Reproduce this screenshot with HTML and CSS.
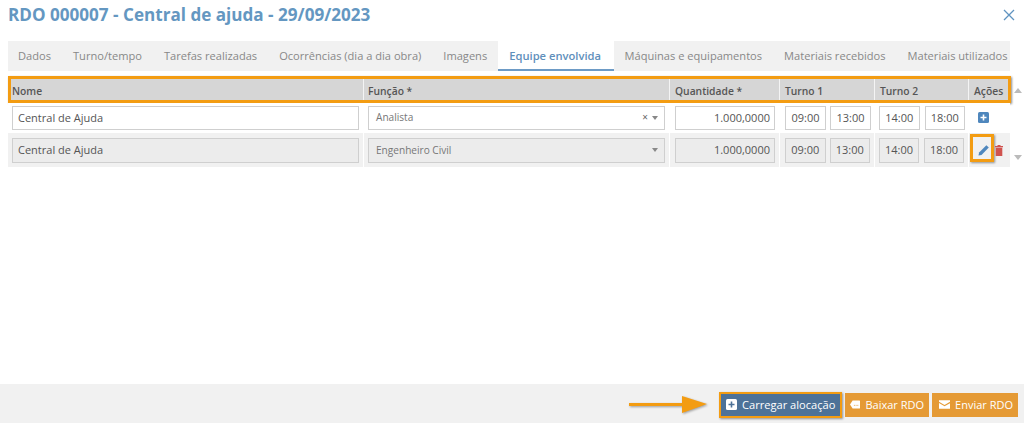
FILE: index.html
```html
<!DOCTYPE html>
<html lang="pt">
<head>
<meta charset="utf-8">
<title>RDO</title>
<link rel="stylesheet" href="styles.css">
</head>
<body>
<div class="page">
  <header class="top">
    <h1>RDO 000007 - Central de ajuda - 29/09/2023</h1>
    <svg class="close" viewBox="0 0 12 12" width="12" height="12"><path d="M1 1l10 10M11 1L1 11" stroke="#5f93c0" stroke-width="1.3" fill="none"/></svg>
  </header>
  <nav class="tabs">
    <a class="tab">Dados</a>
    <a class="tab">Turno/tempo</a>
    <a class="tab">Tarefas realizadas</a>
    <a class="tab">Ocorrências (dia a dia obra)</a>
    <a class="tab">Imagens</a>
    <a class="tab active">Equipe envolvida</a>
    <a class="tab">Máquinas e equipamentos</a>
    <a class="tab">Materiais recebidos</a>
    <a class="tab">Materiais utilizados</a>
  </nav>
  <main class="content">
    <div class="table">
      <div class="row head">
        <div class="cell">Nome</div>
        <div class="cell">Função *</div>
        <div class="cell">Quantidade *</div>
        <div class="cell">Turno 1</div>
        <div class="cell">Turno 2</div>
        <div class="cell">Ações</div>
        <span class="mark mark-head"></span>
      </div>
      <div class="row body">
        <div class="cell"><div class="field wide">Central de Ajuda</div></div>
        <div class="cell"><div class="field select small"><span>Analista</span><span class="x">×</span><span class="caret"></span></div></div>
        <div class="cell qty"><div class="field num">1.000,0000</div></div>
        <div class="cell pair"><div class="field time">09:00</div><div class="field time">13:00</div></div>
        <div class="cell pair second"><div class="field time">14:00</div><div class="field time">18:00</div></div>
        <div class="cell acts">
          <svg viewBox="0 0 11 11" width="11" height="11"><rect width="11" height="11" rx="1.5" fill="#4f87bd"/><path d="M5.5 2.5v6M2.5 5.5h6" stroke="#fff" stroke-width="1.6"/></svg>
        </div>
      </div>
      <div class="row body off">
        <div class="cell"><div class="field wide">Central de Ajuda</div></div>
        <div class="cell"><div class="field select small"><span>Engenheiro Civil</span><span class="caret"></span></div></div>
        <div class="cell qty"><div class="field num">1.000,0000</div></div>
        <div class="cell pair"><div class="field time">09:00</div><div class="field time">13:00</div></div>
        <div class="cell pair second"><div class="field time">14:00</div><div class="field time">18:00</div></div>
        <div class="cell acts">
          <span class="edit">
            <svg viewBox="0 0 12 12" width="12" height="12"><path d="M0.5 11.5l0.6-3L8.4 1.2l2.4 2.4L3.5 10.9z" fill="#4f87bd"/></svg>
          </span>
          <svg class="trash" viewBox="0 0 8 11" width="8" height="11"><path d="M0 1h8v1.2H0zM2.5 0h3v1h-3zM.7 2.8h6.6V11H.7z" fill="#d0534f"/></svg>
        </div>
      </div>
    </div>
    <div class="rail"><span class="up"></span><span class="down"></span></div>
  </main>
  <footer class="foot">
    <svg class="arrow" viewBox="0 0 78 18" width="78" height="18"><path d="M0 7h53V0l25 8-25 9v-7H0z" fill="#f39c12"/></svg>
    <button class="btn blue">
      <svg viewBox="0 0 11 11" width="11" height="11"><rect width="11" height="11" rx="1.5" fill="#fff"/><path d="M5.5 2.5v6M2.5 5.5h6" stroke="#4d7298" stroke-width="1.6"/></svg>
      Carregar alocação
    </button>
    <button class="btn orange baixar">
      <svg viewBox="0 0 12 9" width="12" height="9"><path d="M3 0h7.5A1.5 1.5 0 0 1 12 1.5v6A1.5 1.5 0 0 1 10.5 9H3L0 4.5z" fill="#fff"/><path d="M4.5 5.5h5" stroke="#e59a35" stroke-width="1" stroke-dasharray="1 1"/></svg>
      Baixar RDO
    </button>
    <button class="btn orange enviar">
      <svg viewBox="0 0 12 9" width="12" height="9"><path d="M0 0h12v1.6L6 5 0 1.6zM0 3l6 3.4L12 3v6H0z" fill="#fff"/></svg>
      Enviar RDO
    </button>
  </footer>
</div>
</body>
</html>
```
FILE: styles.css
```css
* { box-sizing: border-box; }
html, body { margin: 0; height: 100%; }
body { background: #fff; font-family: "Open Sans", sans-serif; font-size: 11px; color: #555; overflow: hidden; }
.page { height: 423px; display: flex; flex-direction: column; }
.top { height: 41px; padding: 3px 9px 0 8px; display: flex; justify-content: space-between; align-items: flex-start; }
.top h1 { margin: 0; font-size: 17.1px; line-height: 23px; font-weight: 700; color: #6497c1; }
.close { margin-top: 6px; }
.tabs { margin: 0 8px; height: 30px; display: flex; background: #f1f1f1; width: 1002px; }
.tab { padding: 0 11px; font-size: 11.1px; line-height: 29px; color: #888; white-space: nowrap; }
.tab:first-child { padding-left: 10px; }
.tab.active { background: #fff; color: #5f8fbb; font-weight: 600; font-size: 11.2px; border-bottom: 2.5px solid #6d9bc6; padding: 0 12.5px 0 11px; }
.content { flex: 1; display: flex; padding: 8px 0 0 8px; }
.table { width: 1002px; }
.row { display: grid; grid-template-columns: 356px 306px 110px 95px 94px 41px; position: relative; }
.head { height: 24px; }
.head .cell { background: #d6d6d6; font-weight: 600; font-size: 10.3px; color: #555; line-height: 24px; padding-left: 5px; border-right: 1px solid #f4f4f4; }
.head .cell:first-child { padding-left: 4px; }
.head .cell:nth-child(2) { padding-left: 4px; }
.head .cell:last-child { border-right: 0; padding-left: 6px; }
.mark { position: absolute; border: 3px solid #f39c12; box-shadow: 1px 1px 2px rgba(0,0,0,.45); pointer-events: none; }
.mark-head { left: 0; right: -1px; top: -3px; bottom: 0; }
.body { height: 30px; background: #fff; }
.body .cell { padding: 3px 4px 0; display: flex; gap: 4px; }
.body.off { height: 34px; background: #f1f1f1; }
.body.off .cell { padding-top: 5px; background: #f1f1f1; border-right: 1px solid #fff; }
.body.off .cell:last-child { border-right: 0; }
.field { height: 23.5px; border: 1px solid #cfcfcf; background: #fff; line-height: 21.5px; padding: 0 5px; color: #555; font-size: 11px; white-space: nowrap; }
.off .field { background: #ececec; height: 24.5px; line-height: 22.5px; }
.wide { width: 347px; }
.select { width: 297px; display: flex; align-items: center; padding-left: 7px; padding-right: 6px; }
.small { font-size: 10.1px; color: #777; }
.select span:first-child { flex: 1; }
.x { font-size: 10px; color: #666; margin-right: 4px; }
.caret { width: 0; height: 0; border: 3.5px solid transparent; border-top: 4px solid #888; border-bottom: 0; }
.body .qty { padding-left: 5px; }
.num { width: 100px; text-align: right; padding-right: 4px; }
.time { width: 41px; padding: 0; text-align: center; }
.body .pair { padding-left: 5px; }
.body .pair.second { padding-left: 4px; gap: 5px; }
.body .acts { padding: 9px 0 0 9px; gap: 0; align-items: flex-start; position: relative; }
.off .acts { padding-top: 0; }
.edit { position: absolute; left: 1px; top: 1px; width: 24px; height: 28px; padding-left: 3px; padding-top: 3px; border: 3px solid #f39c12; box-shadow: 1px 1px 2px rgba(0,0,0,.4); display: flex; align-items: center; justify-content: center; }
.trash { position: absolute; left: 26px; top: 12px; }
.rail { width: 14px; position: relative; }
.up, .down { position: absolute; left: 4px; width: 0; height: 0; border: 4px solid transparent; }
.up { top: 9px; border-bottom: 5px solid #bbb; border-top: 0; }
.down { top: 76px; border-top: 5px solid #bbb; border-bottom: 0; }
.foot { height: 39px; background: #f1f1f1; display: flex; align-items: center; justify-content: flex-end; gap: 3px; padding: 2px 6px 0 0; }
.arrow { margin-right: 9px; filter: drop-shadow(1px 1px 1px rgba(0,0,0,.35)); }
.btn { height: 24px; border: 0; padding: 0 5px; font: 11px "Open Sans", sans-serif; color: #fff; display: flex; align-items: center; gap: 5px; white-space: nowrap; }
.btn.orange { background: #e59a35; }
.baixar { width: 84px; }
.enviar { width: 86px; padding-left: 7px; }
.btn.blue { background: #4d7298; outline: 2.5px solid #f39c12; outline-offset: -2.5px; height: 26px; width: 123px; padding-left: 7px; font-size: 11.1px; box-shadow: 1px 1px 2px rgba(0,0,0,.4); }
```
